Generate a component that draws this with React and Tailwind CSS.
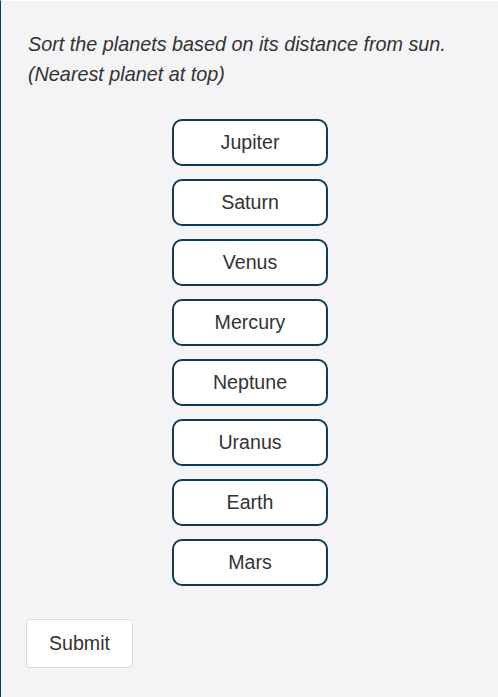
import React, { useState } from 'react';

const PLANETS = ['Jupiter', 'Saturn', 'Venus', 'Mercury', 'Neptune', 'Uranus', 'Earth', 'Mars'];

export default function App() {
  const [items] = useState(PLANETS);

  return (
    <div
      className="w-[498px] h-[697px] bg-[#f4f4f6] border-l border-[#0d3b5e] border-t border-t-white text-[#333333]"
      style={{ fontFamily: '"Liberation Sans", Arial, sans-serif' }}
    >
      <div className="pl-[27px] pt-[28px]">
        <p className="italic text-[19.8px] leading-[30px]">
          Sort the planets based on its distance from sun.
          <br />
          (Nearest planet at top)
        </p>
      </div>

      <div className="flex flex-col items-center gap-[13px] mt-[30px] pl-[1px]">
        {items.map(p => (
          <div key={p}
            className="w-[156px] h-[47px] flex items-center justify-center pt-[1px] bg-white border-2 border-[#0f3956] rounded-[10px] text-[19.6px]">
            {p}
          </div>
        ))}
      </div>

      <div className="pl-[25px] mt-[33px]">
        <button className="w-[107px] h-[49px] pt-[1px] bg-white border border-[#dcdcdc] rounded-[4px] text-[19.6px] text-[#333333]">
          Submit
        </button>
      </div>
    </div>
  );
}
